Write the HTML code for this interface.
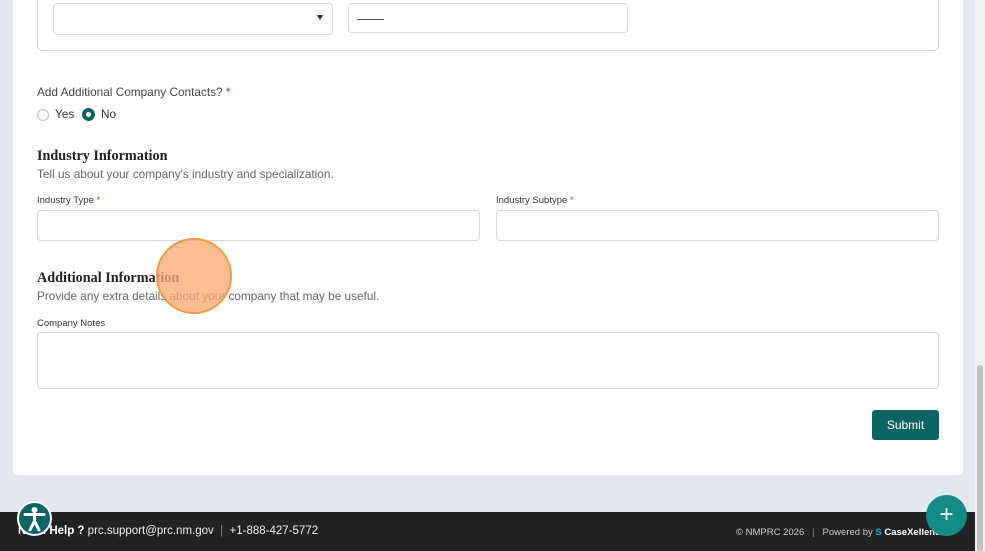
<!DOCTYPE html>
<html><head><style>
*{box-sizing:border-box;margin:0;padding:0}
body{width:985px;height:551px;overflow:hidden;background:#e4e8ee;font-family:"Liberation Sans",sans-serif;color:#333;position:relative}
.card{position:absolute;left:13px;top:-10px;width:950px;height:485px;background:#fff;border-radius:6px}
.abs{position:absolute}
.inp{position:absolute;border:1px solid #d3d6da;border-radius:4px;background:#fff}
.lbl{position:absolute;font-size:11px;color:#333}
.lbl b{color:#d9232e;font-weight:normal}
.h{position:absolute;font-family:"Liberation Serif",serif;font-weight:bold;font-size:14.2px;color:#222}
.sub{position:absolute;font-size:11.8px;color:#666}
.footer{position:absolute;left:0;top:512px;width:975px;height:39px;background:#222;color:#fff;font-size:11.5px}
</style></head><body>
<div class="card"></div>
<div class="inp" style="left:37px;top:-10px;width:902px;height:61px;border-radius:6px"></div>
<div class="inp" style="left:53px;top:3px;width:280px;height:32px"></div>
<div class="abs" style="left:317px;top:15px;width:0;height:0;border-left:3.5px solid transparent;border-right:3.5px solid transparent;border-top:5px solid #222"></div>
<div class="inp" style="left:348px;top:3px;width:280px;height:30px"></div>
<div class="abs" style="left:357px;top:19px;width:27px;height:1px;background:#555"></div>
<div class="lbl" style="left:37px;top:85px;font-size:11.8px;color:#444">Add Additional Company Contacts? <b>*</b></div>
<div class="abs" style="left:37px;top:109px;width:12px;height:12px;border:1px solid #bbb;border-radius:50%"></div>
<div class="lbl" style="left:55px;top:107px;font-size:11.8px">Yes</div>
<div class="abs" style="left:82px;top:108px;width:13px;height:13px;border:4px solid #0e6462;border-radius:50%;background:#fff"></div>
<div class="lbl" style="left:101px;top:107px;font-size:11.8px">No</div>
<div class="h" style="left:37px;top:148px">Industry Information</div>
<div class="sub" style="left:37px;top:167px">Tell us about your company's industry and specialization.</div>
<div class="lbl" style="left:37px;top:195px;font-size:9.5px">Industry Type <b>*</b></div>
<div class="lbl" style="left:496px;top:195px;font-size:9.5px">Industry Subtype <b>*</b></div>
<div class="inp" style="left:37px;top:210px;width:443px;height:31px"></div>
<div class="inp" style="left:496px;top:210px;width:443px;height:31px"></div>
<div class="h" style="left:37px;top:270px">Additional Information</div>
<div class="sub" style="left:37px;top:289px">Provide any extra details about your company that may be useful.</div>
<div class="lbl" style="left:37px;top:318px;font-size:9.5px">Company Notes</div>
<div class="inp" style="left:37px;top:332px;width:902px;height:57px"></div>
<div class="abs" style="left:872px;top:410px;width:67px;height:30px;background:#0e6462;border-radius:3px;color:#fff;font-size:12px;text-align:center;line-height:30px">Submit</div>
<div class="abs" style="left:156px;top:238px;width:76px;height:76px;border-radius:50%;background:rgba(252,170,110,0.75);border:2px solid #f29a4a"></div>
<div class="footer">
<div class="abs" style="left:18px;top:13px"><b>Need Help ?</b> <span style="color:#eee">prc.support@prc.nm.gov &nbsp;<span style="color:#888">|</span>&nbsp; +1-888-427-5772</span></div>
<div class="abs" style="left:736px;top:15px;font-size:9.5px;color:#ccc">© NMPRC 2026 &nbsp; <span style="color:#888">|</span> &nbsp; Powered by <span style="color:#29a8e0;font-weight:bold">S</span> <b style="color:#fff">CaseXellence</b></div>
</div>
<div class="abs" style="left:17px;top:501px;width:35px;height:35px;border-radius:50%;background:#0e6462;border:2px solid #fff">
<svg width="31" height="31" viewBox="0 0 31 31"><circle cx="15.5" cy="7" r="3" fill="#fff"/><path d="M6 11.5 L25 11.5 M15.5 11 L15.5 19 M15.5 18 L11 27 M15.5 18 L20 27" stroke="#fff" stroke-width="3" stroke-linecap="round" fill="none"/></svg></div>
<div class="abs" style="left:926px;top:495px;width:41px;height:41px;border-radius:50%;background:#128c84;color:#fff;font-size:24px;text-align:center;line-height:40px">+</div>
<div class="abs" style="left:975px;top:0;width:10px;height:551px;background:#f1f1f1"></div>
<div class="abs" style="left:977px;top:365px;width:6px;height:186px;background:#c1c1c1;border-radius:3px"></div>
</body></html>
